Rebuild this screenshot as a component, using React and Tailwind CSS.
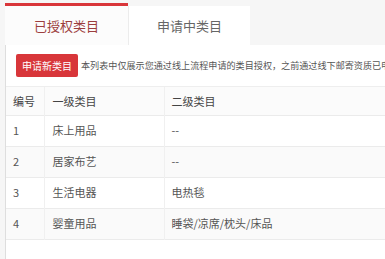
const rows = [
  { id: 1, first: '床上用品', second: '--' },
  { id: 2, first: '居家布艺', second: '--' },
  { id: 3, first: '生活电器', second: '电热毯' },
  { id: 4, first: '婴童用品', second: '睡袋/凉席/枕头/床品' },
];

export default function App() {
  return (
    <div
      className="w-[385px] h-[259px] overflow-hidden bg-[#f6f6f6] pl-[5px] pt-[3px]"
      style={{ fontFamily: '"Noto Sans CJK SC", "Noto Sans", sans-serif' }}
    >
      {/* tabs */}
      <div className="flex h-[42px]">
        <div className="w-[123px] flex flex-col bg-[#fcfcfc]">
          <div className="h-[3px] bg-[#d9363a]" />
          <div className="flex-1 flex items-center justify-center text-[13px] text-[#9c3e3e]">
            已授权类目
          </div>
        </div>
        <div className="w-[122px] mt-[3px] flex items-center justify-center bg-white border-l border-[#ececec] text-[13px] text-[#666]">
          申请中类目
        </div>
      </div>

      {/* panel */}
      <div className="bg-white border-l border-[#dedede] h-full">
        <div className="flex items-center h-[42px] pl-[10px] gap-[3px] whitespace-nowrap border-b border-[#eeeeee] overflow-hidden">
          <button className="h-[23px] w-[62px] rounded-[2px] bg-[#d8363a] text-white text-[10px] shrink-0">
            申请新类目
          </button>
          <span className="text-[9.1px] text-[#555]">
            本列表中仅展示您通过线上流程申请的类目授权，之前通过线下邮寄资质已申
          </span>
        </div>

        <table className="w-full text-[11px] text-[#555] border-collapse">
          <thead>
            <tr className="h-[28px] bg-[#fbfbfb] border-b border-[#ebebeb] text-[#444]">
              <th className="w-[38px] pl-[7px] text-left font-normal border-r border-[#f0f0f0]">编号</th>
              <th className="w-[120px] pl-[8px] text-left font-normal border-r border-[#f0f0f0]">一级类目</th>
              <th className="pl-[7px] text-left font-normal">二级类目</th>
            </tr>
          </thead>
          <tbody>
            {rows.map((r, i) => (
              <tr
                key={r.id}
                className={`h-[31px] border-b border-[#ebebeb] ${i % 2 === 1 ? 'bg-[#fafafa]' : 'bg-white'}`}
              >
                <td className="pl-[7px] border-r border-[#f0f0f0]">{r.id}</td>
                <td className="pl-[8px] border-r border-[#f0f0f0]">{r.first}</td>
                <td className="pl-[7px]">{r.second}</td>
              </tr>
            ))}
          </tbody>
        </table>
      </div>
    </div>
  );
}
